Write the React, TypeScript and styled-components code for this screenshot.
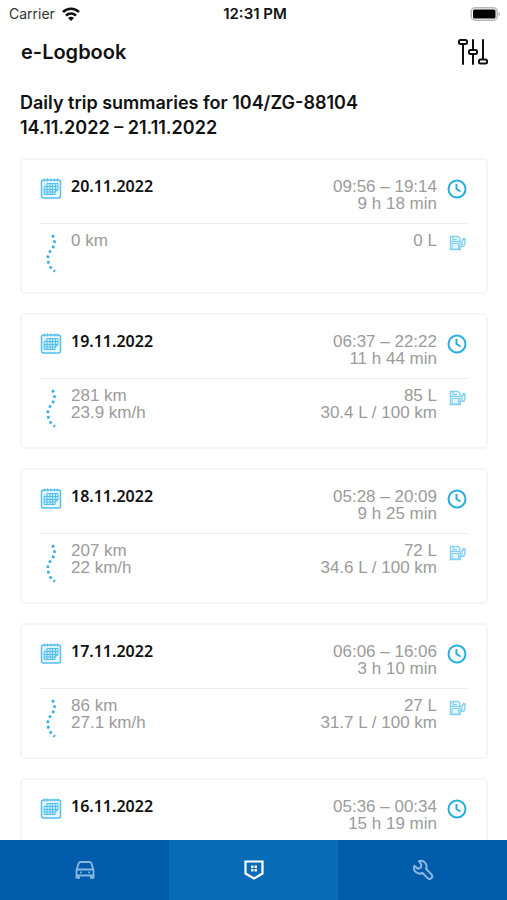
import React from "react";
import styled, { createGlobalStyle, css } from "styled-components";

const GlobalStyle = createGlobalStyle`
  *, *::before, *::after { box-sizing: border-box; }
  body { margin: 0; background: #fff; color: #111; font-family: "Noto Sans", sans-serif; }
  h1, h2, h3, p { margin: 0; }
`;

const Screen = styled.div`
  display: flex;
  flex-direction: column;
  height: 100vh;
  overflow: hidden;
`;

const StatusBar = styled.div`
  display: grid;
  grid-template-columns: 1fr auto 1fr;
  align-items: center;
  flex: none;
  height: 27px;
  padding: 0 6px 0 9px;
  font-family: Inter, sans-serif;
  font-size: 14px;
`;

const Carrier = styled.span`
  display: flex;
  align-items: center;
  gap: 7px;
  color: #333;
`;

const Time = styled.span`
  font-size: 15px;
  font-weight: 600;
`;

const BatterySlot = styled.span`
  display: flex;
  justify-content: flex-end;
`;

const Header = styled.header`
  display: flex;
  align-items: center;
  justify-content: space-between;
  flex: none;
  height: 50px;
  padding: 0 19px 0 21px;
`;

const Title = styled.h1`
  font-family: Inter, sans-serif;
  font-size: 20px;
  font-weight: 600;
  line-height: 24px;
`;

const FilterButton = styled.button`
  display: flex;
  padding: 0;
  border: 0;
  background: none;
  color: #111;
  cursor: pointer;
`;

const Main = styled.main`
  flex: 1;
  min-height: 0;
  overflow: hidden;
  padding: 13px 19px 0 20px;
`;

const Summary = styled.h2`
  font-family: Inter, sans-serif;
  font-size: 18px;
  font-weight: 600;
  line-height: 25px;
  margin-bottom: 18px;
`;

const TripList = styled.div`
  display: flex;
  flex-direction: column;
  gap: 19px;
`;

const Card = styled.article`
  flex: none;
  height: 136px;
  padding: 18px;
  border: 2px solid #f5f5f5;
  border-radius: 5px;
`;

const Row = styled.div<{ $divided?: boolean }>`
  display: grid;
  grid-template-columns: 22px 1fr auto 22px;
  column-gap: 9px;
  align-items: start;
  ${(p) =>
    p.$divided &&
    css`
      height: 46px;
      margin-bottom: 8px;
      border-bottom: 1px solid #ededed;
    `}
`;

const IconSlot = styled.span`
  display: flex;
  justify-content: center;
  color: #27aee0;
`;

const TripDate = styled.h3`
  font-size: 16px;
  font-weight: 600;
  line-height: 17px;
`;

const Detail = styled.p<{ $end?: boolean }>`
  color: #9b9b9b;
  font-family: "Liberation Sans", sans-serif;
  font-size: 17px;
  line-height: 17px;
  white-space: pre-line;
  text-align: ${(p) => (p.$end ? "right" : "left")};
`;

const TabBar = styled.nav`
  display: grid;
  grid-template-columns: repeat(3, 1fr);
  flex: none;
  height: 60px;
  background: #005bab;
`;

const Tab = styled.button<{ $active?: boolean }>`
  display: flex;
  align-items: center;
  justify-content: center;
  padding: 0;
  border: 0;
  cursor: pointer;
  color: ${(p) => (p.$active ? "#fff" : "#8ab8e2")};
  background: ${(p) => (p.$active ? "#086bb5" : "transparent")};
`;

const WifiIcon = () => (
  <svg width="18" height="14" viewBox="0 0 18 14" fill="none" stroke="#111" strokeWidth="2.6" aria-hidden="true">
    <path d="M1 5a11.3 11.3 0 0 1 16 0" />
    <path d="M4 8.600a7 7 0 0 1 10 0" />
    <path d="M9 14 6 11a4.200 4.200 0 0 1 6 0z" fill="#111" stroke="none" />
  </svg>
);

const BatteryIcon = () => (
  <svg width="31" height="14" viewBox="0 0 31 14" aria-label="Battery full" role="img">
    <rect x="1.200" y="0.800" width="26" height="12.400" rx="4" fill="#fff" stroke="#b8b8b8" strokeWidth="1.600" />
    <rect x="3" y="2.500" width="22.500" height="9" rx="1.500" fill="#000" />
    <path d="M28.600 4.800v4.400c2-.9 2-3.500 0-4.400z" fill="#b5b5b5" />
  </svg>
);

const SlidersIcon = () => (
  <svg width="32" height="28" viewBox="0 0 32 28" fill="none" stroke="currentColor" strokeWidth="2" aria-hidden="true">
    <path d="M7 6v20M17 2v10M17 16v10M27 2v19" strokeLinecap="round" />
    <rect x="3" y="2" width="8" height="4" rx="1.500" />
    <rect x="13" y="12" width="8" height="4" rx="1.500" />
    <rect x="23" y="21.500" width="8" height="4" rx="1.500" />
  </svg>
);

const CalendarIcon = () => (
  <svg width="22" height="22" viewBox="0 0 22 22" fill="none" stroke="#55bfec" aria-hidden="true">
    <rect x="1.500" y="2" width="19" height="18" rx="2" fill="#e9f8fe" strokeWidth="1.500" />
    <path d="M4.500 0.500v3M7.500 0.500v3M11 0.500v3M14.500 0.500v3M17.500 0.500v3" />
    <path d="M4 5.500h14v7l-3 4H4z" fill="#c6ebfa" stroke="none" />
    <path d="M7 5.500h11v6.500l-3 1.500v3H4V8.500h14M4 11.500h14M4 14h11M7 5.500v11M10 5.500v11M12.500 5.500v11M15.500 5.500v8" />
  </svg>
);

const ClockIcon = () => (
  <svg width="20" height="21" viewBox="0 0 20 21" fill="none" stroke="currentColor" strokeWidth="2" aria-hidden="true">
    <circle cx="10" cy="11" r="8.500" />
    <path d="M9.500 6v5l4 2.500" />
  </svg>
);

const RouteIcon = () => (
  <svg width="14" height="42" viewBox="0 0 14 42" fill="none" aria-hidden="true">
    <path
      d="M8.500 3C11.500 9 11 13 7.500 17.500C4 22 2.500 26 5 32C6 35 8 37.500 11 39.500"
      stroke="currentColor"
      strokeWidth="2.600"
      strokeDasharray="2.600 3"
    />
  </svg>
);

const PumpIcon = () => (
  <svg width="18" height="20" viewBox="0 0 18 20" fill="none" stroke="#82d0f0" strokeWidth="1.400" aria-hidden="true">
    <path d="M2.500 17V4.500h7.500l2 2V17M1.500 17.500h11.500M2.500 9.500H12M5 4.500v3h4" />
    <path d="M4 11.500h6.500V17H4z" fill="#dff4fc" strokeWidth="1" />
    <path d="M12 14.500h2V9l2-3M14.500 8l2.500-1v4l-1.500 4" />
  </svg>
);

const CarIcon = () => (
  <svg width="22" height="20" viewBox="0 0 22 20" fill="none" stroke="currentColor" strokeWidth="1.800" aria-hidden="true">
    <path d="M2.500 18.500v-8l2-7Q5 2 7 2h8q2 0 2.500 1.500l2 7v8M2.500 9.500h17M2.500 15.500h17M2.500 17.800h2.500v-2.300M19.500 17.800H17v-2.300" />
    <path d="M6 12.600h1.600M14.400 12.600H16" strokeWidth="2" />
  </svg>
);

const LogbookIcon = () => (
  <svg width="20" height="20" viewBox="0 0 20 20" aria-hidden="true">
    <path d="M1.500 1.500h17v12L10 18.500l-8.500-5z" fill="none" stroke="currentColor" strokeWidth="2.200" />
    <path d="M7 5.500h2.500V8H7zM10.500 5.500H13V8h-2.500zM7 9h2.500v2.500H7zM10.500 9H13v2.500h-2.500z" fill="currentColor" />
  </svg>
);

const WrenchIcon = () => (
  <svg width="22" height="22" viewBox="0 0 22 22" fill="none" stroke="currentColor" strokeWidth="2" strokeLinejoin="round" aria-hidden="true">
    <path d="M7 2.200a5.600 5.600 0 0 1 7 7.600l5.400 5.600a2.500 2.500 0 0 1-3.700 3.700l-5.400-5.300a5.600 5.600 0 0 1-7.900-7l3.300 3 2.900-.9.800-3.200z" />
  </svg>
);

interface Trip {
  date: string;
  time: string;
  duration: string;
  distance?: string;
  speed?: string;
  fuel?: string;
  consumption?: string;
}

const trips: Trip[] = [
  { date: "20.11.2022", time: "09:56 – 19:14", duration: "9 h 18 min", distance: "0 km", fuel: "0 L" },
  { date: "19.11.2022", time: "06:37 – 22:22", duration: "11 h 44 min", distance: "281 km", speed: "23.9 km/h", fuel: "85 L", consumption: "30.4 L / 100 km" },
  { date: "18.11.2022", time: "05:28 – 20:09", duration: "9 h 25 min", distance: "207 km", speed: "22 km/h", fuel: "72 L", consumption: "34.6 L / 100 km" },
  { date: "17.11.2022", time: "06:06 – 16:06", duration: "3 h 10 min", distance: "86 km", speed: "27.1 km/h", fuel: "27 L", consumption: "31.7 L / 100 km" },
  { date: "16.11.2022", time: "05:36 – 00:34", duration: "15 h 19 min" },
];

const lines = (...parts: (string | undefined)[]) => parts.filter(Boolean).join("\n");

const TripCard = ({ trip }: { trip: Trip }) => (
  <Card>
    <Row $divided>
      <IconSlot><CalendarIcon /></IconSlot>
      <TripDate>{trip.date}</TripDate>
      <Detail $end>{lines(trip.time, trip.duration)}</Detail>
      <IconSlot><ClockIcon /></IconSlot>
    </Row>
    {trip.distance && (
      <Row>
        <IconSlot><RouteIcon /></IconSlot>
        <Detail>{lines(trip.distance, trip.speed)}</Detail>
        <Detail $end>{lines(trip.fuel, trip.consumption)}</Detail>
        <IconSlot><PumpIcon /></IconSlot>
      </Row>
    )}
  </Card>
);

export default function App() {
  return (
    <>
      <GlobalStyle />
      <Screen>
        <StatusBar>
          <Carrier>Carrier <WifiIcon /></Carrier>
          <Time>12:31 PM</Time>
          <BatterySlot><BatteryIcon /></BatterySlot>
        </StatusBar>
        <Header>
          <Title>e-Logbook</Title>
          <FilterButton aria-label="Filter trips"><SlidersIcon /></FilterButton>
        </Header>
        <Main>
          <Summary>
            Daily trip summaries for 104/ZG-88104
            <br />
            14.11.2022 – 21.11.2022
          </Summary>
          <TripList>
            {trips.map((trip) => (
              <TripCard key={trip.date} trip={trip} />
            ))}
          </TripList>
        </Main>
        <TabBar>
          <Tab aria-label="Vehicles"><CarIcon /></Tab>
          <Tab $active aria-label="Logbook" aria-current="page"><LogbookIcon /></Tab>
          <Tab aria-label="Service"><WrenchIcon /></Tab>
        </TabBar>
      </Screen>
    </>
  );
}
